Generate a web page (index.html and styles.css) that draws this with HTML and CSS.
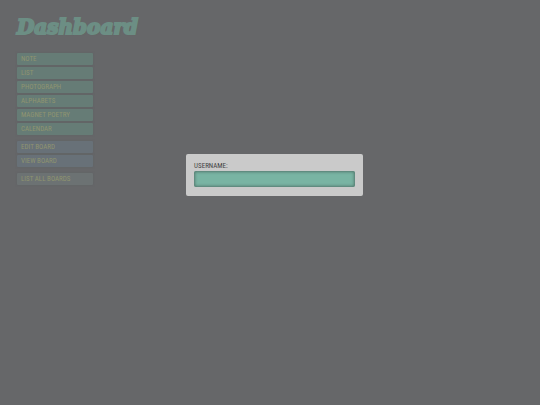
FILE: index.html
```
<!DOCTYPE html>
<html lang="en">

<head>
    <meta charset="UTF-8">
    <meta name="viewport" content="width=device-width, initial-scale=1.0">
    <title>Dashboard</title>
    <link rel="stylesheet" href="styles.css">
</head>

<body>
    <h1>Dashboard</h1>
    <nav class="menu">
        <div class="menu-group">
            <button type="button">Note</button>
            <button type="button">List</button>
            <button type="button">Photograph</button>
            <button type="button">Alphabets</button>
            <button type="button">Magnet Poetry</button>
            <button type="button">Calendar</button>
        </div>
        <div class="menu-group board">
            <button type="button">Edit Board</button>
            <button type="button">View Board</button>
        </div>
        <div class="menu-group all">
            <button type="button">List All Boards</button>
        </div>
    </nav>
    <!-- login popup -->
    <div class="overlay">
        <form class="login">
            <label for="username">Username:</label>
            <input type="text" name="username" id="username">
        </form>
    </div>
</body>

</html>
```
FILE: styles.css
```
* {
    box-sizing: border-box;
}

body {
    margin: 0;
    padding: 13px 17px;
    min-height: 100vh;
    background-color: #666769;
    font-family: "Liberation Sans Narrow", "Roboto Condensed", "Open Sans Condensed", "Roboto", sans-serif;
}

h1 {
    margin: 0 0 12px;
    font-family: "DejaVu Serif", serif;
    font-size: 20px;
    line-height: 28px;
    font-weight: bold;
    font-style: italic;
    color: #6c8e84;
    -webkit-text-stroke: 2px #6c8e84;
    text-shadow: 1px 1px 1px #5e6463;
}

.menu {
    display: flex;
    flex-direction: column;
    gap: 6px;
    width: 76px;
}

.menu-group {
    display: flex;
    flex-direction: column;
    gap: 2px;
}

button {
    height: 12px;
    padding: 0 4px;
    border: none;
    border-radius: 1px;
    background-color: #667c76;
    box-shadow: 0 0 2px #5e6264;
    color: #8f9470;
    font-family: inherit;
    font-size: 7px;
    line-height: 12px;
    text-align: left;
    text-transform: uppercase;
    white-space: nowrap;
}

.board button {
    background-color: #687178;
}

.all button {
    background-color: #6c7273;
}

.overlay {
    position: fixed;
    inset: 0;
    display: flex;
    justify-content: center;
    align-items: center;
    padding: 0 0 55px 9px;
}

.login {
    display: flex;
    flex-direction: column;
    width: 33.3%;
    padding: 8px 8px 9px;
    border-radius: 2px;
    background-color: #cacaca;
}

label {
    color: #444;
    font-size: 7px;
    line-height: 9px;
    text-transform: uppercase;
}

input {
    width: 100%;
    height: 16px;
    padding: 0 4px;
    border: none;
    border-radius: 2px;
    outline: none;
    background-color: #79b4a3;
    box-shadow: inset 0 0 3px 1px #53786e;
    font-family: inherit;
    font-size: 8px;
}
```
